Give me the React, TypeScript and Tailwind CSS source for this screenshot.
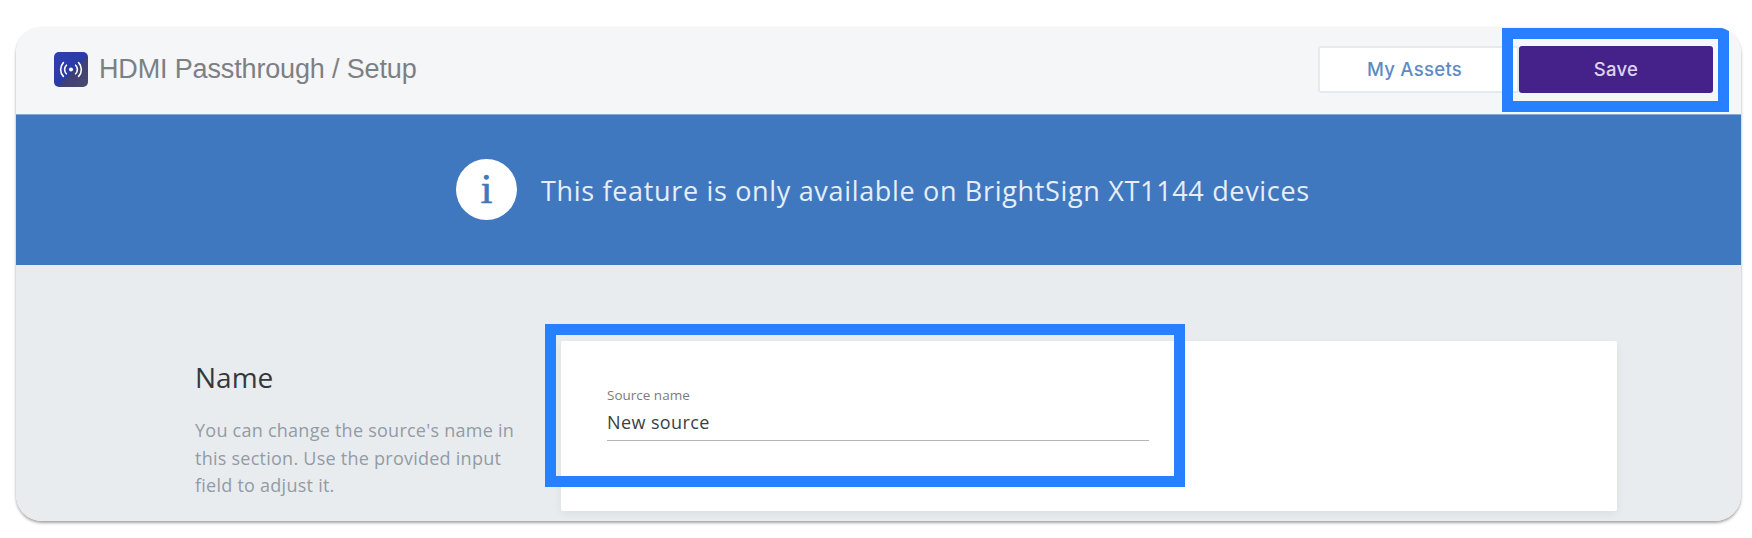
export default function App() {
  return (
    <div className="w-[1752px] h-[538px] bg-white pt-[27px] pl-[16px] font-['Open_Sans',sans-serif] overflow-hidden">
      <div className="w-[1725px] h-[494px] rounded-[26px] overflow-hidden shadow-[0_2px_3px_rgba(0,0,0,0.35),0_0_1px_rgba(0,0,0,0.08)] flex flex-col">
        <header className="h-[87px] bg-[#f5f6f8] flex items-center pl-[38px] pr-[28px] pb-[2px] shrink-0">
          <svg width="34" height="35" viewBox="0 0 34 35" className="shrink-0">
            <defs>
              <linearGradient id="lg" x1="0" y1="0" x2="1" y2="1">
                <stop offset="0" stopColor="#2f3fae" />
                <stop offset="0.55" stopColor="#2a3aa6" />
                <stop offset="0.56" stopColor="#3e3f78" />
                <stop offset="1" stopColor="#4a4a6e" />
              </linearGradient>
            </defs>
            <rect width="34" height="35" rx="5" fill="url(#lg)" />
            <circle cx="17" cy="17.5" r="2" fill="#fff" />
            <g fill="none" stroke="#fff" strokeWidth="1.6" strokeLinecap="round">
              <path d="M12.4 13.2a6 6 0 0 0 0 8.6" />
              <path d="M21.6 13.2a6 6 0 0 1 0 8.6" />
              <path d="M9.4 10.6a10 10 0 0 0 0 13.8" />
              <path d="M24.6 10.6a10 10 0 0 1 0 13.8" />
            </g>
          </svg>
          <h1 className="ml-[11px] text-[27px] leading-none font-['Liberation_Sans',sans-serif] font-normal text-[#7d8083] tracking-[-0.15px]">
            HDMI Passthrough / Setup
          </h1>
          <div className="ml-auto flex items-center">
            <button className="w-[201px] h-[47px] bg-white border-2 border-[#e6e9ee] rounded-[3px] text-[#5d8cc4] text-[18.5px] font-medium font-['Inter',sans-serif] tracking-[0.3px] pr-[8px]">
              My Assets
            </button>
            <div className="relative">
              <button className="w-[194px] h-[47px] bg-[#44228a] rounded-[3px] text-[#dcd3ec] text-[18.5px] font-medium font-['Inter',sans-serif] tracking-[0.3px]">
                Save
              </button>
              <div className="absolute left-[-17px] right-[-16px] top-[-18px] bottom-[-19px] border-[11px] border-[#2680ff]" />
            </div>
          </div>
        </header>
        <div className="h-[151px] bg-[#4078c0] flex items-center shrink-0 pl-[440px] pb-[2px] border-t border-[#8aa9d4]">
          <div className="w-[61px] h-[61px] rounded-full bg-white flex items-center justify-center shrink-0 text-[#4078c0] text-[42px] font-['Liberation_Serif',serif] leading-none [-webkit-text-stroke:0.7px_#4078c0]">
            i
          </div>
          <p className="ml-[24px] mt-[2px] text-[27px] leading-none text-[#e6eef8] tracking-[0.67px]">
            This feature is only available on BrightSign XT1144 devices
          </p>
        </div>
        <main className="flex-1 bg-[#e9ecef] flex pl-[179px] pr-[124px] pt-[76px] min-h-0">
          <section className="w-[366px] shrink-0 pt-[25px]">
            <h2 className="text-[28px] leading-none text-[#33383c] mt-[-3px]">Name</h2>
            <p className="mt-[26px] text-[18px] leading-[27.5px] text-[#929ba6] w-[340px] tracking-[0.25px]">
              You can change the source's name in this section. Use the provided input field to adjust it.
            </p>
          </section>
          <section className="relative flex-1 h-[170px] bg-white rounded-[2px] shadow-[0_3px_10px_rgba(0,0,0,0.06)] pl-[46px] pt-[47px]">
            <div className="w-[542px] border-b border-[#b5b5b5] pb-[7px]">
              <div className="text-[13.5px] leading-[14px] text-[#7d7d7d]">Source name</div>
              <div className="mt-[9px] text-[18px] leading-[22px] text-[#3c3f42] tracking-[0.4px]">New source</div>
            </div>
            <div className="absolute left-[-16px] top-[-17px] w-[640px] h-[163px] border-[11px] border-[#2680ff]" />
          </section>
        </main>
      </div>
    </div>
  );
}
